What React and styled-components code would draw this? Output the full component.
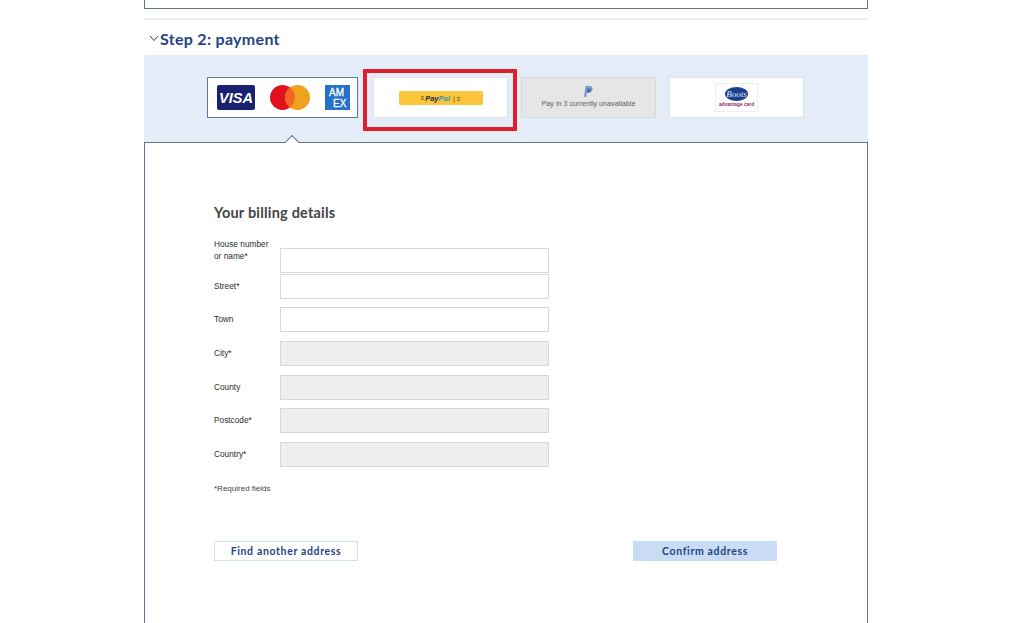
import React from "react";
import styled, { createGlobalStyle } from "styled-components";

const Global = createGlobalStyle`
  html, body { margin: 0; padding: 0; background: #fff; }
  body { font-family: "Liberation Sans", Arial, sans-serif; overflow: hidden; }
`;

const Page = styled.div`
  width: 724px;
  height: 623px;
  margin-left: 144px;
  display: flex;
  flex-direction: column;
`;

const PrevStep = styled.div`
  height: 8px;
  flex: none;
  border: 1px solid #5b7590;
  border-top: none;
`;

const Divider = styled.div`
  height: 2px;
  flex: none;
  margin-top: 9px;
  background: #eeeeee;
`;

const StepHeading = styled.h2`
  height: 35px;
  flex: none;
  margin: 0;
  padding: 2px 0 0 5px;
  box-sizing: border-box;
  display: flex;
  align-items: center;
  gap: 1px;
  font-family: Lato, sans-serif;
  font-size: 16px;
  font-weight: 700;
  letter-spacing: 0.3px;
  color: #1f4480;
`;

const Band = styled.div`
  height: 87px;
  flex: none;
  box-sizing: border-box;
  padding: 22px 0 0 63px;
  display: flex;
  align-items: flex-start;
  background: #e4ecf8;
  position: relative;
`;

const Tab = styled.div`
  box-sizing: border-box;
  width: ${(p) => p.$width}px;
  height: 41px;
  margin-right: ${(p) => p.$after}px;
  display: flex;
  flex-direction: column;
  align-items: center;
  justify-content: center;
  flex: none;
  background: ${(p) => (p.$disabled ? "#e6e6e6" : "#fff")};
  border: 1px solid ${(p) => (p.$active ? "#5b7a9c" : p.$disabled ? "#d6d9dc" : "#dde3ea")};
`;

const CardTab = styled(Tab)`
  flex-direction: row;
  justify-content: flex-start;
  padding-left: 9px;
  gap: 15px;
`;

const Highlight = styled.div`
  position: absolute;
  left: 219px;
  top: 14px;
  width: 154px;
  height: 62px;
  box-sizing: border-box;
  border: 4px solid #e01f2d;
`;

const Notch = styled.div`
  position: absolute;
  left: 143px;
  top: 82px;
  width: 9px;
  height: 9px;
  background: #fff;
  border-left: 1px solid #5b7590;
  border-top: 1px solid #5b7590;
  transform: rotate(45deg);
`;

const PayPalButton = styled.div`
  width: 84px;
  height: 14px;
  margin-top: 1px;
  border-radius: 2px;
  background: #fcc439;
  display: flex;
  align-items: center;
  justify-content: center;
  gap: 1px;
  font-family: "Liberation Sans", sans-serif;
  font-size: 7.5px;
  font-style: italic;
  font-weight: 700;
  color: #1d2d50;
`;

const PalText = styled.span`
  color: #2a9bc8;
`;

const PayPalMarks = styled.span`
  font-style: normal;
  font-size: 6px;
  color: #3b3a20;
`;

const UnavailableText = styled.span`
  margin-top: 1px;
  font-size: 7.2px;
  line-height: 10px;
  color: #606060;
`;

const BootsBadge = styled.div`
  width: 43px;
  height: 29px;
  box-sizing: border-box;
  border: 1px solid #eee;
  display: flex;
  flex-direction: column;
  align-items: center;
  justify-content: center;
  gap: 1px;
`;

const BootsCaption = styled.span`
  font-family: "Liberation Sans", sans-serif;
  font-size: 4.8px;
  line-height: 6px;
  font-weight: 700;
  color: #8c2a6e;
  white-space: nowrap;
`;

const Panel = styled.div`
  flex: 1;
  box-sizing: border-box;
  border: 1px solid #5b7590;
  border-bottom: none;
  padding: 61px 0 0 69px;
`;

const FormTitle = styled.h3`
  margin: 0 0 26px;
  height: 18px;
  font-family: Lato, sans-serif;
  font-size: 14.5px;
  line-height: 18px;
  font-weight: 700;
  letter-spacing: 0.2px;
  color: #444;
`;

const Rows = styled.div`
  display: flex;
  flex-direction: column;
`;

const Row = styled.div`
  display: grid;
  grid-template-columns: 66px 269px;
  align-items: center;
  height: 24.5px;
  margin-bottom: ${(p) => p.$gap}px;
`;

const Label = styled.label`
  font-size: 8.3px;
  line-height: 12px;
  color: #2b2b2b;
  margin-top: ${(p) => (p.$raised ? "-21px" : "-1px")};
`;

const Input = styled.div`
  box-sizing: border-box;
  height: 24.5px;
  background: ${(p) => (p.$filled ? "#efefef" : "#fff")};
  border: 1px solid #d8d8d8;
`;

const RequiredNote = styled.p`
  margin: 16.5px 0 0;
  height: 12px;
  font-size: 8px;
  line-height: 12px;
  color: #444;
`;

const Actions = styled.div`
  margin-top: 45.5px;
  width: 563px;
  display: flex;
  justify-content: space-between;
`;

const Button = styled.button`
  box-sizing: border-box;
  width: 144px;
  height: 20px;
  padding: 0;
  font-family: Lato, sans-serif;
  font-size: 10.5px;
  font-weight: 700;
  letter-spacing: 0.65px;
  color: #1f4480;
  background: ${(p) => (p.$primary ? "#c9dcf3" : "#fff")};
  border: 1px solid ${(p) => (p.$primary ? "#c9dcf3" : "#d5e1ea")};
`;

const Chevron = () => (
  <svg width="10" height="7" viewBox="0 0 10 7" fill="none">
    <path d="M1 1 5 5.500 9 1" stroke="#1f4480" strokeWidth="1" />
  </svg>
);

const CardLogos = () => (
  <>
    <svg width="38" height="25" viewBox="0 0 38 25">
      <rect width="38" height="25" rx="2" fill="#1a2170" />
      <text x="19" y="18" textAnchor="middle" fontFamily="Liberation Sans" fontSize="14.5" fontWeight="700" fontStyle="italic" fill="#fff">VISA</text>
    </svg>
    <svg width="40" height="25" viewBox="0 0 40 25">
      <circle cx="12.5" cy="12.5" r="12.5" fill="#e2101e" />
      <circle cx="27.5" cy="12.5" r="12.5" fill="#f0a21e" />
      <path d="M20 2.500a12.500 12.500 0 0 1 0 20 12.500 12.500 0 0 1 0-20z" fill="#f26522" />
    </svg>
    <svg width="25" height="25" viewBox="0 0 25 25">
      <rect width="25" height="25" fill="#2671c9" />
      <text x="4" y="10.500" fontFamily="Liberation Sans" fontSize="10" fill="#fff" stroke="#fff" strokeWidth="0.3">AM</text>
      <text x="8" y="21.500" fontFamily="Liberation Sans" fontSize="10" fill="#fff" stroke="#fff" strokeWidth="0.3">EX</text>
    </svg>
  </>
);

const PayPalP = () => (
  <svg width="9" height="12" viewBox="0 0 9 12">
    <path d="M1.500 0H5.500C8 0 9 1.500 8.500 3.500 8 6 6.300 7 4 7H3L2.300 11H0z" fill="#7f9cc7" />
    <path d="M3 2.500H6C7 2.500 7.400 3.200 7 4.500 6.600 6 5.500 6.500 4 6.500H3.200z" fill="#4a6ea9" />
  </svg>
);

const BootsOval = () => (
  <svg width="23" height="14" viewBox="0 0 23 14">
    <ellipse cx="11.500" cy="7" rx="11.500" ry="7" fill="#1c3f8f" />
    <text x="11.500" y="10" textAnchor="middle" fontFamily="Liberation Serif" fontSize="9" fontStyle="italic" fill="#dfe6f5">Boots</text>
  </svg>
);

const fields = [
  { label: "Street*", gap: 8.5 },
  { label: "Town", gap: 9.5 },
  { label: "City*", filled: true, gap: 9.5 },
  { label: "County", filled: true, gap: 8.5 },
  { label: "Postcode*", filled: true, gap: 9.5 },
  { label: "Country*", filled: true, gap: 0 },
];

export default function App() {
  return (
    <Page>
      <Global />
      <PrevStep />
      <Divider />
      <StepHeading>
        <Chevron />
        Step 2: payment
      </StepHeading>
      <Band>
        <CardTab $width={151} $after={15} $active>
          <CardLogos />
        </CardTab>
        <Tab $width={135} $after={13}>
          <PayPalButton>
            <PayPalMarks>≡</PayPalMarks>
            <span>Pay<PalText>Pal</PalText></span>
            <PayPalMarks>⋮≡</PayPalMarks>
          </PayPalButton>
        </Tab>
        <Tab $width={135} $after={13} $disabled>
          <PayPalP />
          <UnavailableText>Pay in 3 currently unavailable</UnavailableText>
        </Tab>
        <Tab $width={135} $after={0}>
          <BootsBadge>
            <BootsOval />
            <BootsCaption>advantage card</BootsCaption>
          </BootsBadge>
        </Tab>
        <Highlight />
        <Notch />
      </Band>
      <Panel>
        <FormTitle>Your billing details</FormTitle>
        <Rows>
          <Row $gap={1.5}>
            <Label $raised>House number<br />or name*</Label>
            <Input />
          </Row>
          {fields.map((f) => (
            <Row key={f.label} $gap={f.gap}>
              <Label>{f.label}</Label>
              <Input $filled={f.filled} />
            </Row>
          ))}
        </Rows>
        <RequiredNote>*Required fields</RequiredNote>
        <Actions>
          <Button>Find another address</Button>
          <Button $primary>Confirm address</Button>
        </Actions>
      </Panel>
    </Page>
  );
}
